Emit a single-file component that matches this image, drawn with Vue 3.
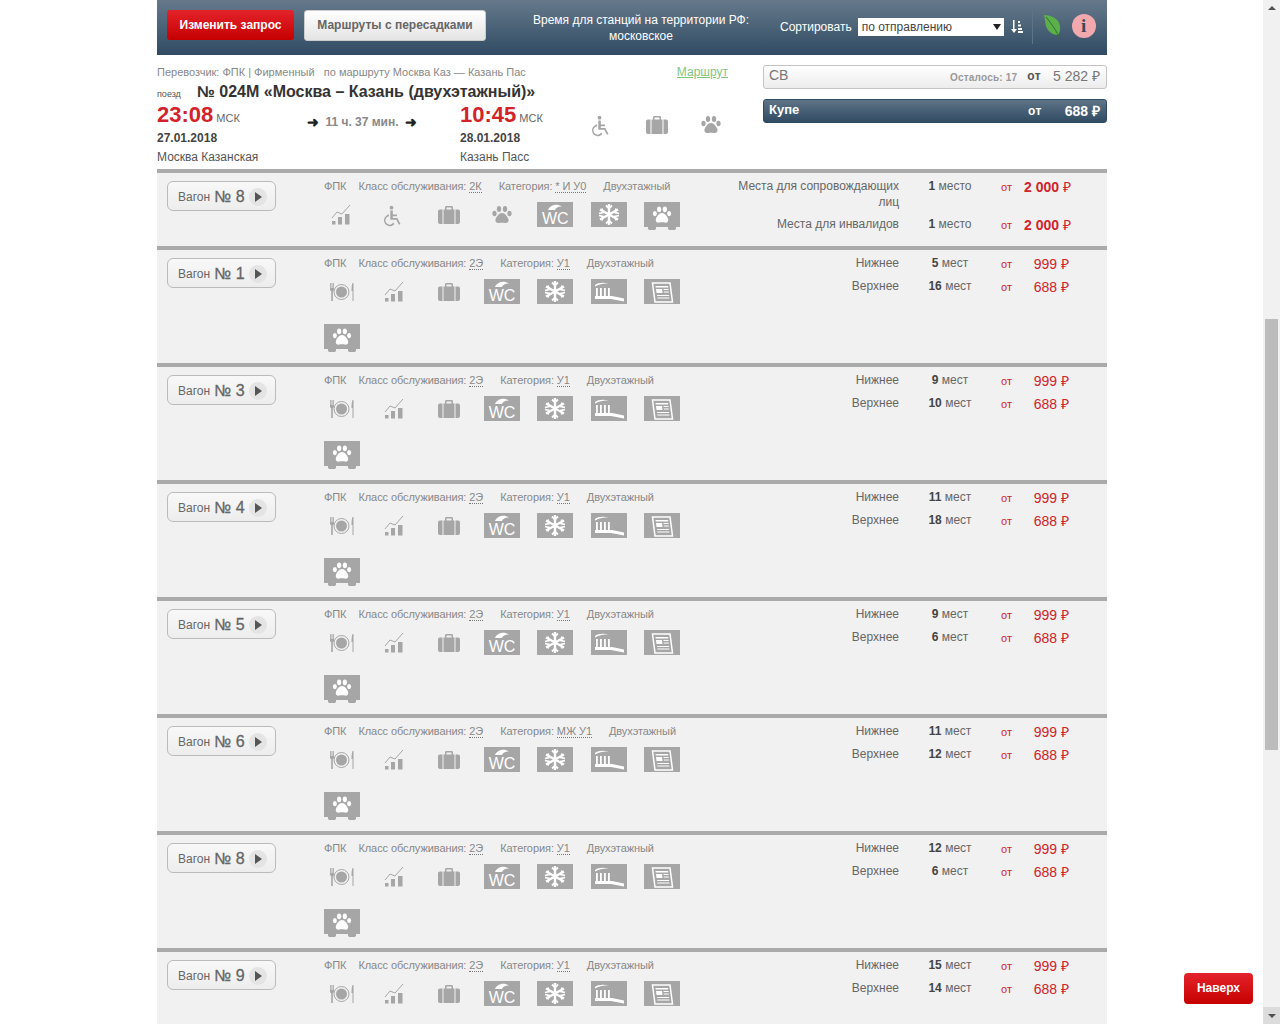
<script setup>
const food = "food", chart = "chart", bag = "bag", wheel = "wheel", paw = "paw";
const wc = "wc", snow = "snow", brush = "brush", news = "news", pet = "pet";

const regular = [food, chart, bag, wc, snow, brush, news, pet];

const wagons = [
  {
    num: 8,
    cls: "2К",
    cat: "* И У0",
    icons: [chart, wheel, bag, paw, wc, snow, pet],
    seats: [
      { label: "Места для сопровождающих лиц", n: 1, word: "место", price: "2 000" },
      { label: "Места для инвалидов", n: 1, word: "место", price: "2 000" },
    ],
  },
  { num: 1, cat: "У1", up: [5, 16] },
  { num: 3, cat: "У1", up: [9, 10] },
  { num: 4, cat: "У1", up: [11, 18] },
  { num: 5, cat: "У1", up: [9, 6] },
  { num: 6, cat: "МЖ У1", up: [11, 12] },
  { num: 8, cat: "У1", up: [12, 6] },
  { num: 9, cat: "У1", up: [15, 14] },
].map((w) =>
  w.seats
    ? w
    : {
        ...w,
        cls: "2Э",
        icons: regular,
        seats: [
          { label: "Нижнее", n: w.up[0], word: "мест", price: "999" },
          { label: "Верхнее", n: w.up[1], word: "мест", price: "688" },
        ],
      }
);

const boxed = (name) => [wc, snow, brush, news].includes(name);
</script>

<template>
  <svg class="sprite" width="0" height="0">
    <symbol id="food" viewBox="0 0 36 25">
      <path d="M6 4v6c0 1.500.5 2 1.200 2.300V22h1.600v-9.700C9.500 12 10 11.500 10 10V4h-.8v5h-.7V4h-1v5h-.7V4z" />
      <circle cx="17.500" cy="13" r="7.500" fill="none" stroke="currentColor" />
      <circle cx="17.500" cy="13" r="5.500" />
      <path d="M28.500 4c-.8 2-1 5-1 8h1v10h1V4z" />
    </symbol>
    <symbol id="chart" viewBox="0 0 36 25">
      <path d="M8 19h3.500v3.500H8zM14 15h4v7.500h-4zM21 12h4.500v10.500H21z" />
      <path d="M8 16l5-6 5 2 8-9" fill="none" stroke="currentColor" />
    </symbol>
    <symbol id="bag" viewBox="0 0 36 25">
      <g transform="translate(1.500)">
        <path d="M12.500 8V5.500c0-1 .5-1.500 1.500-1.500h5c1 0 1.500.5 1.500 1.500V8H19V5.500h-5V8z" />
        <path d="M7.500 7.500h2.500V22H7.500c-1.200 0-2-.8-2-2V9.500c0-1.200.8-2 2-2zM11 7.500h11V22H11zM23 7.500h2.500c1.200 0 2 .8 2 2V20c0 1.200-.8 2-2 2H23z" />
      </g>
    </symbol>
    <symbol id="wheel" viewBox="0 0 36 25">
      <circle cx="14.500" cy="5.700" r="1.900" />
      <path d="M13.300 8.500h2.500v4h4.200v1.700h-4.200v1.800h4.500l3.200 6-1.600.8-2.600-5h-6z" />
      <path d="M12 12.600v1.700a4.200 4.200 0 1 0 4.300 6.200l1.100 1.400A5.800 5.800 0 1 1 12 12.600z" />
    </symbol>
    <symbol id="paw" viewBox="0 0 36 25">
      <ellipse cx="15" cy="7" rx="2.200" ry="3" />
      <ellipse cx="21" cy="7" rx="2.200" ry="3" />
      <ellipse cx="10.500" cy="11.500" rx="2.100" ry="2.800" />
      <ellipse cx="25.500" cy="11.500" rx="2.100" ry="2.800" />
      <path d="M18 11c3 0 5.500 3.500 6.500 6.500.6 2.300-1.300 4-3.500 3.500-2-.5-4-.5-6 0-2.200.5-4.100-1.200-3.500-3.500 1-3 3.500-6.500 6.500-6.500z" />
    </symbol>
    <symbol id="snow" viewBox="0 0 36 25">
      <g fill="none" stroke="#fff" stroke-width="2.400">
        <path d="M18 2v21M9 7.500l18 10M27 7.500l-18 10" />
        <path d="M15 3.500l3 3 3-3M15 21.500l3-3 3 3M8 11.500l4-1-1-4M28 11.500l-4-1 1-4M8 13.500l4 1-1 4M28 13.500l-4 1 1 4" stroke-width="1.800" />
      </g>
    </symbol>
    <symbol id="brush" viewBox="0 0 36 25">
      <path d="M4 6c3-2.500 8-3 14-1.500-5 0-10 .5-14 3z" fill="#fff" />
      <path d="M5 9h1.800v8H5zM9 9h1.800v8H9zM13 9h1.800v8H13zM17 9h1.800v8H17z" fill="#fff" />
      <path d="M4 17h17l12 2.500v3L20 20H4z" fill="#fff" />
    </symbol>
    <symbol id="news" viewBox="0 0 36 25">
      <path d="M8.500 4h17.500l2.500 19H11z" fill="none" stroke="#fff" stroke-width="1.500" />
      <path d="M11.500 7h12.500l.2 1.500H11.700zM12 10h6l.5 4h-6zM19.500 10h5l.1 1h-5zM19.800 12.500h5l.1 1h-5zM13 16h12l.1 1H13.100zM13.300 18.500h12l.1 1H13.400z" fill="#fff" />
    </symbol>
  </svg>

  <div class="page">
    <main class="content">
      <header class="topbar">
        <button class="btn-red">Изменить запрос</button>
        <button class="btn-grey">Маршруты с пересадками</button>
        <div class="tz">Время для станций на территории РФ:<br />московское</div>
        <span class="sort-label">Сортировать</span>
        <div class="select">по отправлению<i></i></div>
        <svg class="sort-ico" viewBox="0 0 13 13" width="13" height="13">
          <path d="M3 0h1.500v9H7l-3 4-3-4h2zM8 1h2v2H8zM8 4.500h3v2H8zM8 8h4v2H8zM8 11h5v2H8z" fill="#fff" />
        </svg>
        <div class="sep"></div>
        <svg class="leaf" viewBox="0 0 20 24" width="20" height="24">
          <path d="M1 1c8 0 15 4 16 11 .5 4-.5 7-2 9-5 0-10-3-12-9C2 8 2 5 1 1z" fill="#5cb04a" />
          <path d="M3 3c4 5 9 11 13 20" fill="none" stroke="#2f6f33" />
        </svg>
        <div class="info">i</div>
      </header>

      <section class="train">
        <div class="train-left">
          <div class="carrier">
            <span>Перевозчик: ФПК | Фирменный &nbsp; по маршруту Москва Каз — Казань Пас</span>
            <a class="route">Маршрут</a>
          </div>
          <div class="title"><small>поезд</small><b>№ 024М «Москва – Казань (двухэтажный)»</b></div>
          <div class="times">
            <div class="stop">
              <div class="time">23:08<span>МСК</span></div>
              <div class="date">27.01.2018</div>
              <div class="station">Москва Казанская</div>
            </div>
            <div class="dur">
              <span class="arrow">➜</span>
              <span>11 ч. 37 мин.</span>
              <span class="arrow">➜</span>
            </div>
            <div class="stop arrive">
              <div class="time">10:45<span>МСК</span></div>
              <div class="date">28.01.2018</div>
              <div class="station">Казань Пасс</div>
            </div>
            <div class="amenities">
              <svg v-for="a in [wheel, bag, paw]" :key="a" class="ico"><use :href="'#' + a" /></svg>
            </div>
          </div>
        </div>
        <div class="train-right">
          <div class="tariff">
            <span class="t-name">СВ</span>
            <span class="t-left">Осталось: 17</span>
            <span class="t-from">от</span>
            <span class="t-price">5 282 ₽</span>
          </div>
          <div class="tariff active">
            <span class="t-name">Купе</span>
            <span class="t-from">от</span>
            <span class="t-price">688 ₽</span>
          </div>
        </div>
      </section>

      <section v-for="(w, i) in wagons" :key="i" class="wagon" :class="{ short: i === 0 }">
        <div class="wagon-col">
          <button class="wagon-btn">Вагон <b>№ {{ w.num }}</b><span class="play"></span></button>
        </div>
        <div class="meta-col">
          <div class="meta">
            <span class="m1">ФПК</span>
            <span>Класс обслуживания: <u>{{ w.cls }}</u></span>
            <span>Категория: <u>{{ w.cat }}</u></span>
            <span>Двухэтажный</span>
          </div>
          <div class="icons">
            <div v-for="(ic, k) in w.icons" :key="k" class="cell" :class="{ boxed: boxed(ic) }">
              <span v-if="ic === wc" class="wc">
                <svg viewBox="0 0 18 7" width="18" height="7"><path d="M2 7c2-4.500 8-7 14-3.500-3.500-.3-6 1-7 3.500z" fill="#fff" /></svg>
                WC
              </span>
              <div v-else-if="ic === pet" class="pet">
                <svg class="ico white"><use href="#paw" /></svg>
              </div>
              <svg v-else class="ico" :class="{ white: boxed(ic) }"><use :href="'#' + ic" /></svg>
            </div>
          </div>
        </div>
        <div class="seats">
          <div v-for="s in w.seats" :key="s.label" class="seat">
            <span class="s-label">{{ s.label }}</span>
            <span class="s-count"><b>{{ s.n }}</b> {{ s.word }}</span>
            <span class="s-from">от</span>
            <span class="s-price" :class="{ big: s.price.length > 3 }">{{ s.price }} <em>₽</em></span>
          </div>
        </div>
      </section>
    </main>
  </div>

  <button class="to-top">Наверх</button>
  <div class="scrollbar">
    <div class="arr up"></div>
    <div class="thumb"></div>
    <div class="arr down"></div>
  </div>
</template>

<style>
html,
body {
  margin: 0;
  height: 1024px;
  overflow: hidden;
  background: #fff;
}
</style>

<style scoped>
.sprite {
  position: absolute;
}

.page {
  width: 1263px;
  height: 1024px;
  overflow: hidden;
  font-family: "Liberation Sans", Arial, sans-serif;
  font-size: 12px;
  color: #555;
}

.content {
  width: 950px;
  margin-left: 157px;
}

button {
  font-family: inherit;
  cursor: pointer;
}

/* top bar */
.topbar {
  height: 55px;
  display: flex;
  align-items: center;
  padding-left: 10px;
  box-sizing: border-box;
  background: linear-gradient(#66798b, #2f4b63);
  color: #fff;
}

.btn-red {
  width: 127px;
  height: 30px;
  margin-bottom: 5px;
  border: 0;
  border-radius: 3px;
  color: #fff;
  font-size: 12px;
  font-weight: bold;
  background: linear-gradient(#e3232b, #c60000);
}

.btn-grey {
  width: 182px;
  height: 31px;
  margin-left: 10px;
  margin-bottom: 5px;
  border: 1px solid #ccc;
  border-radius: 3px;
  color: #666;
  font-size: 12px;
  font-weight: bold;
  background: linear-gradient(#fff, #e4e4e4);
}

.tz {
  width: 232px;
  margin-left: 39px;
  text-align: center;
  line-height: 16px;
}

.sort-label {
  margin-left: 23px;
  margin-bottom: 2px;
}

.select {
  width: 146px;
  height: 18px;
  line-height: 18px;
  margin-left: 6px;
  margin-bottom: 2px;
  padding-left: 4px;
  box-sizing: border-box;
  background: #fff;
  color: #444;
  position: relative;
}

.select i {
  position: absolute;
  right: 3px;
  top: 6px;
  border: 4px solid transparent;
  border-top: 6px solid #222;
  border-bottom: 0;
}

.sort-ico {
  margin-left: 6px;
  margin-bottom: 3px;
}

.sep {
  width: 1px;
  height: 36px;
  margin-left: 9px;
  margin-bottom: 3px;
  background: #5d7487;
}

.leaf {
  margin-left: 10px;
  margin-bottom: 3px;
}

.info {
  width: 24px;
  height: 24px;
  margin-left: 9px;
  margin-bottom: 3px;
  border-radius: 50%;
  background: #f2a9ae;
  color: #3a4a58;
  font: bold 19px/24px "Liberation Serif", serif;
  text-align: center;
}

/* train summary */
.train {
  height: 114px;
  display: flex;
  box-sizing: border-box;
  padding-top: 10px;
}

.train-left {
  width: 606px;
}

.carrier {
  display: flex;
  width: 571px;
  justify-content: space-between;
  font-size: 11px;
  color: #888;
  line-height: 14px;
}

.route {
  color: #7fc67e;
  font-size: 12px;
  text-decoration: underline;
}

.title {
  margin-top: 3px;
  display: flex;
  align-items: baseline;
  color: #333;
  line-height: 20px;
}

.title small {
  width: 40px;
  font-size: 9px;
  color: #555;
}

.title b {
  font-size: 16px;
}

.times {
  display: flex;
  margin-top: -2px;
}

.stop {
  width: 140px;
}

.arrive {
  width: 125px;
  margin-left: 33px;
}

.time {
  font-size: 22px;
  font-weight: bold;
  color: #d2232a;
  line-height: 26px;
}

.time span {
  margin-left: 3px;
  font-size: 11px;
  font-weight: normal;
  color: #666;
}

.date {
  font-weight: bold;
  color: #444;
  margin-top: -1px;
  line-height: 16px;
}

.station {
  margin-top: 3px;
  line-height: 16px;
}

.dur {
  width: 130px;
  display: flex;
  justify-content: center;
  gap: 6px;
  font-weight: bold;
  color: #888;
  line-height: 16px;
  padding-top: 12px;
  white-space: nowrap;
}

.arrow {
  font-size: 14px;
  color: #222;
}

.amenities {
  display: flex;
  gap: 18px;
  padding-top: 10px;
}

.ico {
  width: 36px;
  height: 25px;
  display: block;
  color: #a6a6a6;
  fill: currentColor;
}

.ico.white {
  color: #fff;
}

.train-right {
  width: 344px;
}

.tariff {
  height: 24px;
  display: flex;
  align-items: center;
  box-sizing: border-box;
  padding: 0 6px 4px 5px;
  margin-bottom: 10px;
  border: 1px solid #c4c4c4;
  border-radius: 3px;
  background: linear-gradient(#fff, #ececec);
  color: #777;
}

.t-name {
  font-size: 14px;
  margin-right: auto;
}

.t-left {
  font-size: 10px;
  font-weight: bold;
  letter-spacing: 0.2px;
  color: #999;
  margin-top: 4px;
}

.t-from {
  font-weight: bold;
  letter-spacing: 0.4px;
  color: #555;
  margin-top: 2px;
  margin-left: 10px;
  margin-right: 12px;
}

.t-price {
  font-size: 14px;
  font-weight: normal;
}

.tariff.active {
  border-color: #2f4b63;
  background: linear-gradient(#5f7386, #2f4b63);
  color: #fff;
}

.active .t-name {
  font-size: 13px;
}

.active .t-name,
.active .t-price,
.active .t-from {
  font-weight: bold;
  color: #fff;
}

.active .t-from {
  margin-top: 4px;
  margin-right: 23px;
}

.active .t-price {
  margin-top: 2px;
}

/* wagon rows */
.wagon {
  height: 117px;
  box-sizing: border-box;
  display: flex;
  border-top: 4px solid #aaa;
  background: #f1f1f1;
}

.wagon.short {
  height: 77px;
}

.wagon-col {
  width: 167px;
  padding: 8px 0 0 10px;
  box-sizing: border-box;
}

.wagon-btn {
  width: 109px;
  height: 30px;
  border: 1px solid #bbb;
  border-radius: 6px;
  background: linear-gradient(#f8f8f8, #ededed);
  color: #666;
  font-size: 12px;
  padding: 1px 0 0 10px;
  display: flex;
  align-items: center;
}

.wagon-btn b {
  font-size: 16px;
  font-weight: normal;
  -webkit-text-stroke: 0.3px #666;
  margin-left: 4px;
}

.play {
  width: 18px;
  height: 18px;
  margin-left: 4px;
  border-radius: 50%;
  background: #e4e4e4;
  position: relative;
}

.play::after {
  content: "";
  position: absolute;
  left: 6px;
  top: 4px;
  border-left: 7px solid #555;
  border-top: 5px solid transparent;
  border-bottom: 5px solid transparent;
}

.meta-col {
  width: 403px;
}

.meta {
  display: flex;
  gap: 17px;
  font-size: 11px;
  letter-spacing: -0.08px;
  color: #888;
  line-height: 14px;
  padding-top: 6px;
  white-space: nowrap;
}

.meta .m1 {
  margin-right: -5px;
}

.meta u {
  text-decoration: none;
  border-bottom: 1px dotted #777;
}

.icons {
  display: grid;
  grid-template-columns: repeat(7, 36px);
  column-gap: 17.33px;
  row-gap: 20px;
  margin-top: 9px;
}

.cell {
  height: 25px;
}

.cell.boxed {
  background: #a6a6a6;
}

.wc {
  display: block;
  color: #fff;
  font-size: 16px;
  line-height: 13px;
  text-align: center;
}

.wc svg {
  display: block;
  margin: 1px auto 2px;
}

.pet {
  height: 25px;
  background: #a6a6a6;
  position: relative;
}

.pet .ico {
  transform: scale(0.95);
  transform-origin: 50% 50%;
}

.pet::after {
  content: "";
  position: absolute;
  left: 3px;
  right: 3px;
  top: 25px;
  height: 3px;
  background: radial-gradient(circle at 5px 0, #a6a6a6 4px, transparent 4.500px),
    radial-gradient(circle at 25px 0, #a6a6a6 4px, transparent 4.500px);
}

.seats {
  width: 342px;
  padding-top: 5px;
  color: #666;
  box-sizing: border-box;
}

.seat {
  display: grid;
  grid-template-columns: 172px 102px 23px 45px;
  align-items: start;
  line-height: 16px;
  margin-bottom: 7px;
}

.short .seat {
  margin-bottom: 6px;
}

.s-label {
  text-align: right;
}

.s-count {
  text-align: center;
}

.s-count b {
  color: #444;
}

.s-from {
  font-size: 11px;
  color: #d2232a;
  line-height: 14px;
  padding-top: 2px;
}

.s-price {
  font-size: 14px;
  color: #d2232a;
  text-align: right;
  line-height: 14px;
  padding-top: 2px;
  white-space: nowrap;
}

.s-price.big {
  font-weight: bold;
}

.s-price em {
  font-style: normal;
  font-weight: normal;
}

/* overlays */
.to-top {
  position: fixed;
  left: 1184px;
  top: 973px;
  width: 69px;
  height: 31px;
  padding-bottom: 3px;
  border: 0;
  border-radius: 4px;
  color: #fff;
  font-size: 12px;
  font-weight: bold;
  font-family: "Liberation Sans", Arial, sans-serif;
  background: linear-gradient(#e3232b, #c60000);
}

.scrollbar {
  position: fixed;
  right: 0;
  top: 0;
  width: 17px;
  height: 1024px;
  background: #f1f1f1;
}

.thumb {
  position: absolute;
  left: 2px;
  top: 319px;
  width: 13px;
  height: 431px;
  background: #bcbcbc;
}

.arr {
  position: absolute;
  left: 0;
  width: 17px;
  height: 17px;
}

.arr::after {
  content: "";
  position: absolute;
  left: 5px;
  border-left: 4px solid transparent;
  border-right: 4px solid transparent;
}

.arr.up {
  top: 0;
}

.arr.up::after {
  top: 6px;
  border-bottom: 4px solid #505050;
}

.arr.down {
  bottom: 0;
  background: #dcdcdc;
}

.arr.down::after {
  top: 7px;
  border-top: 4px solid #505050;
}
</style>
